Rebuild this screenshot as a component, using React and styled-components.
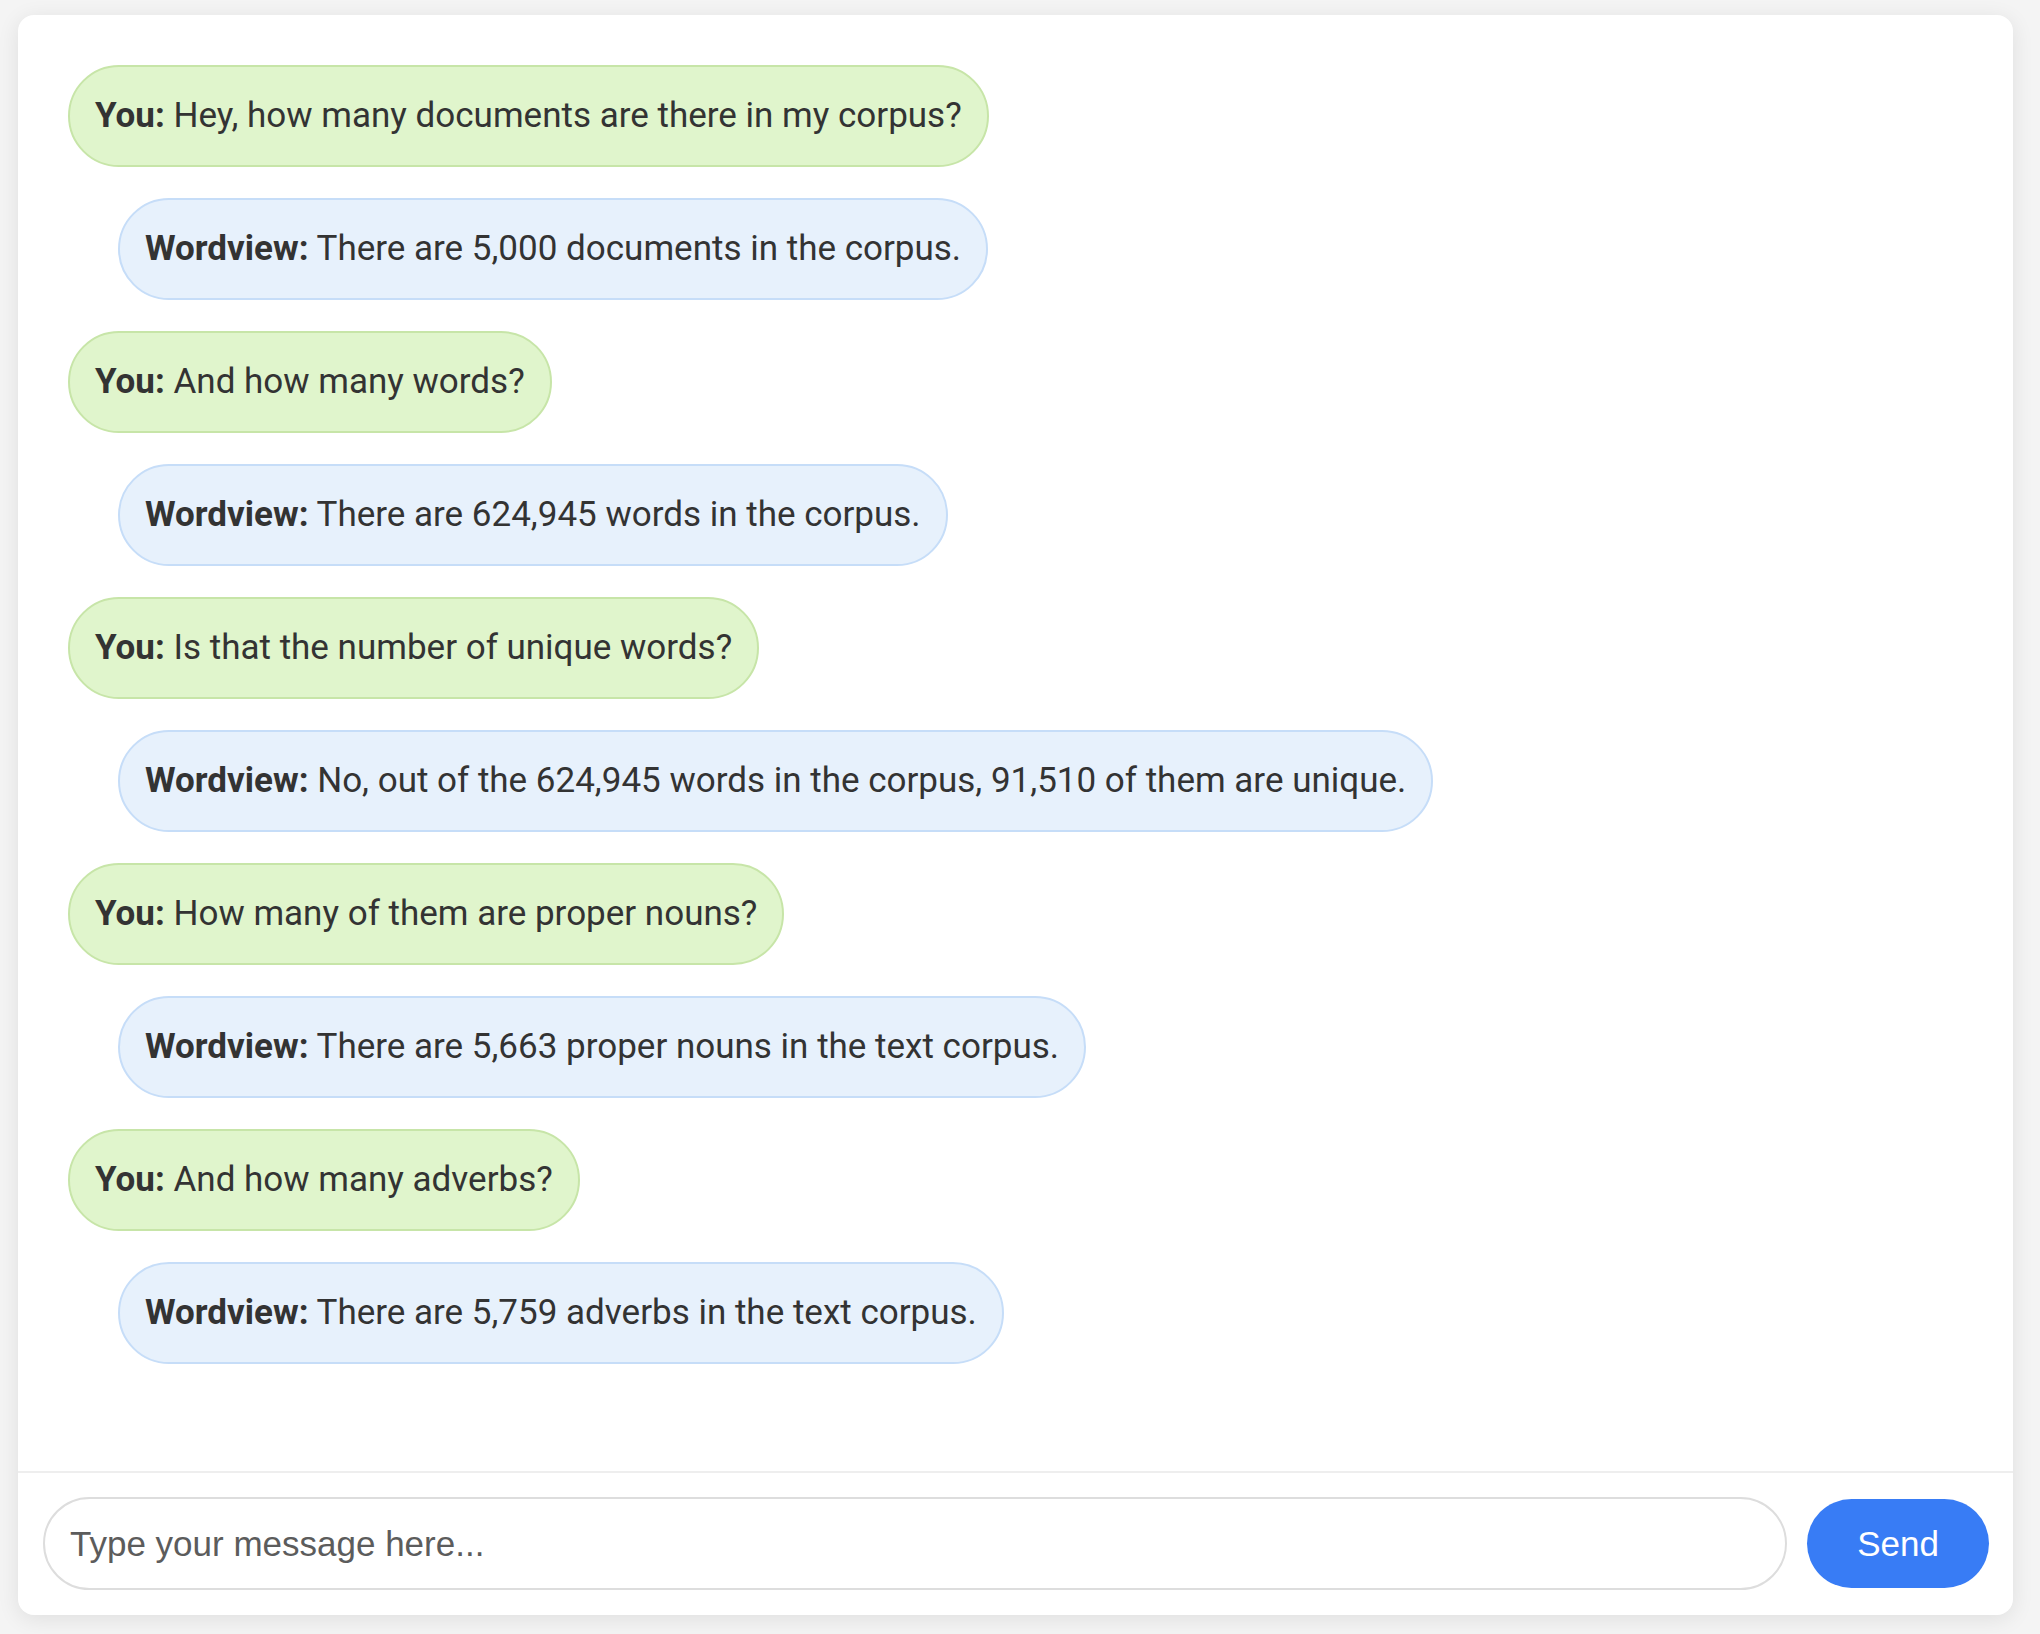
import React from "react";
import styled, { createGlobalStyle } from "styled-components";

const GlobalStyle = createGlobalStyle`
  html, body {
    margin: 0;
    padding: 0;
    background: #f4f4f4;
  }
  body {
    font-family: Roboto, "Liberation Sans", Arial, sans-serif;
  }
  * { box-sizing: border-box; }
`;

const Page = styled.div`
  padding: 15px 27px 19px 18px;
`;

const Card = styled.div`
  width: 1995px;
  height: 1600px;
  background: #ffffff;
  border-radius: 16px;
  box-shadow: 0 4px 22px rgba(0, 0, 0, 0.09);
  display: flex;
  flex-direction: column;
  overflow: hidden;
`;

const Messages = styled.div`
  flex: 1;
  padding: 50px 50px 0 50px;
  display: flex;
  flex-direction: column;
  align-items: flex-start;
  gap: 31px;
`;

const Bubble = styled.div`
  margin-left: ${(p) => (p.$bot ? "50px" : "0")};
  padding: 25px 25px;
  border-radius: 52px;
  border: 2px solid ${(p) => (p.$bot ? "#c6ddf8" : "#c7e5a8")};
  background: ${(p) => (p.$bot ? "#e7f1fc" : "#e0f5cc")};
  color: #333333;
  font-family: Roboto, "Liberation Sans", Arial, sans-serif;
  font-size: 35px;
  line-height: 48px;
  white-space: nowrap;
`;

const Speaker = styled.strong`
  font-weight: 700;
`;

const Footer = styled.div`
  border-top: 2px solid #eeeeee;
  padding: 24px 24px 25px 25px;
  display: flex;
  align-items: center;
  gap: 20px;
`;

const Input = styled.input`
  flex: 1;
  height: 93px;
  border: 2px solid #dddddd;
  border-radius: 47px;
  padding: 0 25px;
  font-family: "Liberation Sans", Arial, sans-serif;
  font-size: 35px;
  color: #333;
  outline: none;
  background: #fff;
  &::placeholder {
    color: #5c5c5c;
  }
`;

const SendButton = styled.button`
  width: 182px;
  height: 89px;
  border: none;
  border-radius: 45px;
  background: #387cf5;
  color: #ffffff;
  font-family: "Liberation Sans", Arial, sans-serif;
  font-size: 35px;
  cursor: pointer;
`;

const messages = [
  { bot: false, text: "Hey, how many documents are there in my corpus?" },
  { bot: true, text: "There are 5,000 documents in the corpus." },
  { bot: false, text: "And how many words?" },
  { bot: true, text: "There are 624,945 words in the corpus." },
  { bot: false, text: "Is that the number of unique words?" },
  { bot: true, text: "No, out of the 624,945 words in the corpus, 91,510 of them are unique." },
  { bot: false, text: "How many of them are proper nouns?" },
  { bot: true, text: "There are 5,663 proper nouns in the text corpus." },
  { bot: false, text: "And how many adverbs?" },
  { bot: true, text: "There are 5,759 adverbs in the text corpus." },
];

export default function App() {
  return (
    <>
      <GlobalStyle />
      <Page>
        <Card>
          <Messages>
            {messages.map((m, i) => (
              <Bubble key={i} $bot={m.bot}>
                <Speaker>{m.bot ? "Wordview:" : "You:"}</Speaker> {m.text}
              </Bubble>
            ))}
          </Messages>
          <Footer>
            <Input placeholder="Type your message here..." />
            <SendButton>Send</SendButton>
          </Footer>
        </Card>
      </Page>
    </>
  );
}
